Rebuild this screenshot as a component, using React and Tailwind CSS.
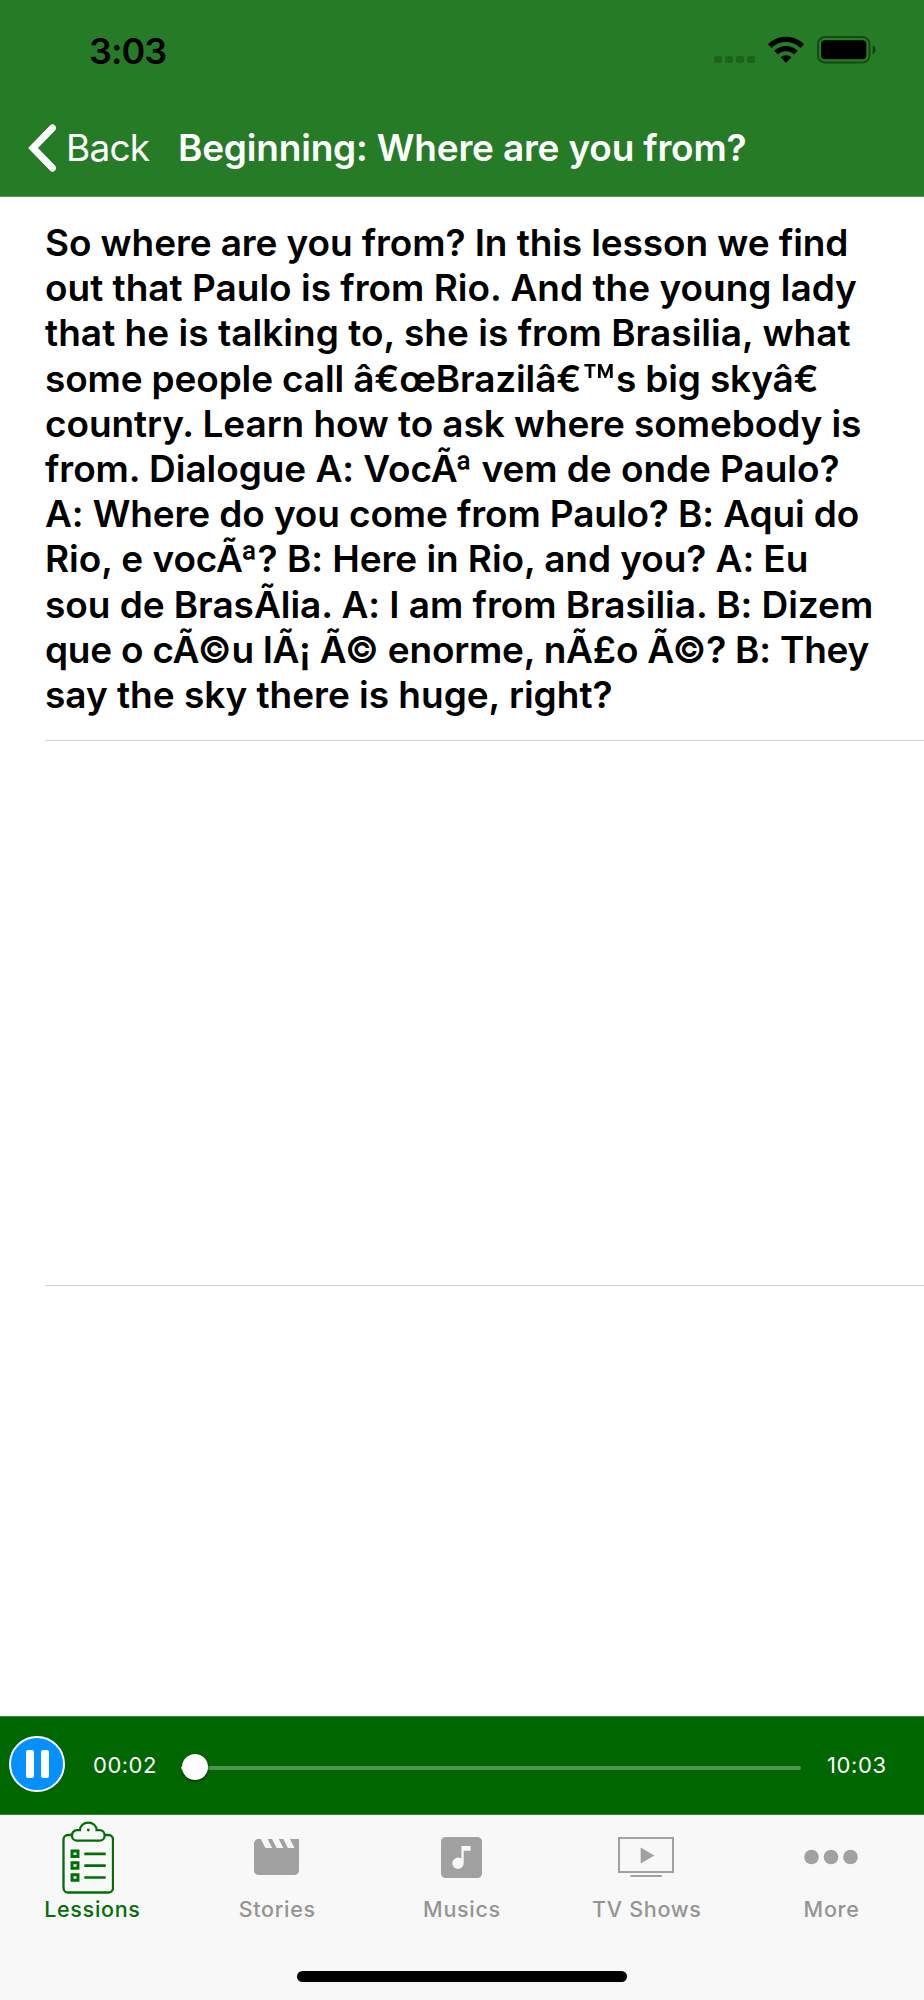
import { useState } from "react";

const transcript = [
  { text: "So where are you from? In this lesson we find", tracking: "tracking-[-0.1px]" },
  { text: "out that Paulo is from Rio. And the young lady", tracking: "tracking-[0px]" },
  { text: "that he is talking to, she is from Brasilia, what", tracking: "tracking-[0.03px]" },
  { text: "some people call â€œBrazilâ€™s big skyâ€", tracking: "tracking-[-0.15px]" },
  { text: "country. Learn how to ask where somebody is", tracking: "tracking-[-0.09px]" },
  { text: "from. Dialogue A: VocÃª vem de onde Paulo?", tracking: "tracking-[-0.06px]" },
  { text: "A: Where do you come from Paulo? B: Aqui do", tracking: "tracking-[-0.12px]" },
  { text: "Rio, e vocÃª? B: Here in Rio, and you? A: Eu", tracking: "tracking-[-0.07px]" },
  { text: "sou de BrasÃlia. A: I am from Brasilia. B: Dizem", tracking: "tracking-[-0.05px]" },
  { text: "que o cÃ©u lÃ¡ Ã© enorme, nÃ£o Ã©? B: They", tracking: "tracking-[-0.22px]" },
  { text: "say the sky there is huge, right?", tracking: "tracking-[-0.02px]" },
];

const tabs = [
  { label: "Lessions", Icon: ClipboardIcon },
  { label: "Stories", Icon: MovieIcon },
  { label: "Musics", Icon: MusicIcon },
  { label: "TV Shows", Icon: TvIcon },
  { label: "More", Icon: MoreIcon },
];

function WifiIcon() {
  return (
    <svg width="38" height="28" viewBox="0 0 38 28">
      <path d="M1 8.200C6 3.200 12 .7 19 .7s13 2.500 18 7.500l-3.600 3.700C29.300 8 24.400 6 19 6S8.700 8 4.600 11.900z" />
      <path d="M7.300 14.800C10.600 11.600 14.600 10 19 10s8.400 1.600 11.700 4.800L27 18.500c-2.300-2.100-5-3.200-8-3.200s-5.700 1.100-8 3.200z" />
      <path d="M13.600 21.200c1.500-1.300 3.300-2 5.400-2s3.900.7 5.400 2L19 26.700z" />
    </svg>
  );
}

function BatteryIcon() {
  return (
    <svg width="60" height="28" viewBox="0 0 60 28">
      <rect x="1" y="1" width="51.500" height="25.500" rx="7" fill="none" stroke="#000" strokeOpacity=".4" strokeWidth="2" />
      <rect x="4" y="4.300" width="45.300" height="19" rx="4" />
      <path d="M55.600 9.300c1.900.8 3 2.500 3 4.500s-1.100 3.700-3 4.500z" fillOpacity=".45" />
    </svg>
  );
}

function ClipboardIcon() {
  return (
    <svg width="52" height="74" viewBox="0 0 52 74" fill="none" stroke="currentColor" strokeWidth="2.300" className="-ml-2 mt-px">
      <path d="M9.500 14H6a4.500 4.500 0 0 0-4.500 4.500V67a4.500 4.500 0 0 0 4.500 4.500h40.500A4.500 4.500 0 0 0 51 67V18.500a4.500 4.500 0 0 0-4.500-4.500H43" />
      <path d="M18 9.200c0-4.500 3.600-7.500 8.300-7.500s8.300 3 8.300 7.500h3a5 5 0 0 1 5 5v0.500a5 5 0 0 1-5 5H15a5 5 0 0 1-5-5v-0.500a5 5 0 0 1 5-5z" />
      <circle cx="26.300" cy="9" r="1.400" fill="currentColor" stroke="none" />
      <path d="M10 30h6v5.500h-6zM10 41.800h6v5.500h-6zM10 53.700h6v5.500h-6z" strokeWidth="2.900" />
      <path d="M22.300 32.800h21.400M22.300 44.600h21.400M22.300 56.500h21.400" strokeWidth="2.700" />
    </svg>
  );
}

function MovieIcon() {
  return (
    <svg width="45" height="36" viewBox="0 0 45 36" fill="currentColor">
      <path d="M36 0l4.500 9h-6.700L29.300 0h-4.500l4.500 9h-6.700L18.100 0h-4.500l4.500 9h-6.700L6.900 0H4.500A4.500 4.500 0 0 0 0 4.500v27A4.500 4.500 0 0 0 4.500 36h36a4.500 4.500 0 0 0 4.500-4.500V0z" />
    </svg>
  );
}

function MusicIcon() {
  return (
    <svg width="41" height="41" viewBox="0 0 41 41" fill="currentColor">
      <path d="M36.500 0h-32A4.500 4.500 0 0 0 0 4.500v32A4.500 4.500 0 0 0 4.500 41h32a4.500 4.500 0 0 0 4.500-4.500v-32A4.500 4.500 0 0 0 36.500 0zM29.500 13.700h-6.800v12.500a5.700 5.700 0 1 1-2.300-4.600V9h9.100z" />
    </svg>
  );
}

function TvIcon() {
  return (
    <svg width="56" height="41" viewBox="0 0 56 41" fill="currentColor">
      <rect x="1" y="1" width="54" height="34" fill="none" stroke="currentColor" strokeWidth="2" />
      <path d="M22.700 10.500L36.300 18.500 22.700 26.500z" />
      <rect x="12.300" y="38" width="31.500" height="2" />
    </svg>
  );
}

function MoreIcon() {
  return (
    <svg width="54" height="16" viewBox="0 0 54 16" fill="currentColor">
      <circle cx="7.500" cy="8" r="7.300" />
      <circle cx="27" cy="8" r="7.300" />
      <circle cx="46.500" cy="8" r="7.300" />
    </svg>
  );
}

// the ™ glyph is drawn larger than the rest of the line
function Line({ text, tracking }) {
  const [before, after] = text.split("™");

  return (
    <p className={`h-[45.200px] ${tracking}`}>
      {before}
      {after && (
        <>
          <span className="relative top-[11px] px-px text-[53px] leading-[0px] font-medium">™</span>
          {after}
        </>
      )}
    </p>
  );
}

function Header() {
  return (
    <header className="h-[197px] bg-[#267b26] border-b border-[#55955a]">
      <div className="h-[99px] pl-[89px] pr-[47px] pt-px flex items-center justify-between">
        <span className="text-[36px] font-semibold tracking-[-1px] pt-px">3:03</span>
        <div className="flex items-center">
          <div className="flex gap-[3px] mt-[19px] mr-3">
            {[0, 1, 2, 3].map((i) => (
              <div key={i} className="w-2 h-[7px] rounded-[2px] bg-black/20" />
            ))}
          </div>
          <WifiIcon />
          <div className="ml-3">
            <BatteryIcon />
          </div>
        </div>
      </div>
      <div className="h-[97px] flex items-center pl-7 text-white text-[37px] leading-[45px] whitespace-nowrap">
        <svg width="30" height="48" viewBox="0 0 30 48" fill="none" stroke="#fff" strokeWidth="7" strokeLinecap="round" strokeLinejoin="miter">
          <path d="M24.500 4L5 24l19.500 20" />
        </svg>
        <span className="ml-2 w-[112px] font-normal tracking-[-0.8px]">Back</span>
        <h1 className="font-semibold tracking-[-0.2px]">Beginning: Where are you from?</h1>
      </div>
    </header>
  );
}

function Player() {
  const [playing, setPlaying] = useState(true);

  return (
    <div className="h-[99px] bg-[#006600] border-y border-[#3c863c] flex items-center text-white text-[22px]">
      <button
        onClick={() => setPlaying(!playing)}
        className="ml-[9px] size-14 rounded-full border-2 border-white bg-[#0590ff] flex items-center justify-center gap-[7px] -mt-[3px]"
      >
        <div className="w-2 h-7 rounded-[2px] bg-white" />
        <div className="w-2 h-7 rounded-[2px] bg-white" />
      </button>
      <span className="ml-7 w-[88px] tracking-[0.5px]">00:02</span>
      <div className="relative w-[620px] h-1 mt-[5px] rounded-full bg-[#4d944d]">
        <div className="absolute left-0 top-0 w-3 h-1 rounded-full bg-white" />
        <div className="absolute left-px -top-3 size-[26px] rounded-full bg-white shadow-[0_1px_3px_rgba(0,0,0,0.6)]" />
      </div>
      <span className="ml-[26px] tracking-[0.6px]">10:03</span>
    </div>
  );
}

export default function App() {
  const [active, setActive] = useState("Lessions");

  return (
    <div className="w-[924px] h-[2000px] flex flex-col bg-white text-black overflow-hidden font-['Inter',sans-serif]">
      <Header />

      <main className="flex-1 pl-[45px]">
        <div className="h-[544px] pt-[23px] border-b border-[#d3d3d5] text-[37px] leading-[45.200px] font-semibold whitespace-nowrap">
          {transcript.map((line) => (
            <Line key={line.text} {...line} />
          ))}
        </div>
        <div className="h-[545px] border-b border-[#d3d3d5]" />
      </main>

      <Player />

      <nav className="h-[185px] bg-[#f8f8f8] flex flex-col items-center">
        <div className="w-full flex">
          {tabs.map(({ label, Icon }) => (
            <div
              key={label}
              onClick={() => setActive(label)}
              className={`flex-1 flex flex-col items-center cursor-pointer ${active === label ? "text-[#006f06]" : "text-[#a1a1a1]"}`}
            >
              <div className="h-[84px] flex items-center justify-center pr-px">
                <Icon />
              </div>
              <span className={`text-[21.500px] leading-[20px] font-medium tracking-[0.7px] ${active === label ? "" : "text-[#949494]"}`}>
                {label}
              </span>
            </div>
          ))}
        </div>
        <div className="mt-[52px] w-[330px] h-[11px] rounded-full bg-black" />
      </nav>
    </div>
  );
}
